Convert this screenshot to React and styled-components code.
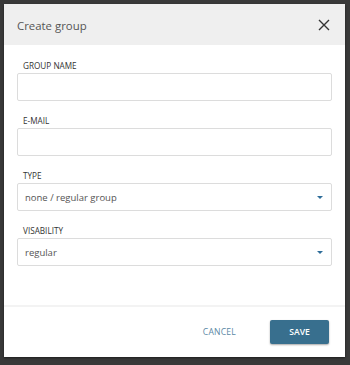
import React, { useState } from "react";
import styled, { createGlobalStyle } from "styled-components";

const GlobalStyle = createGlobalStyle`
  html, body {
    margin: 0;
    padding: 0;
    background: #393939;
  }
  body {
    padding: 4px 5px 8px 4px;
    font-family: "Open Sans", "Liberation Sans", sans-serif;
  }
`;

const Modal = styled.div`
  width: 341px;
  height: 353px;
  background: #fff;
  display: flex;
  flex-direction: column;
  box-shadow: 0 1px 2px rgba(0, 0, 0, 0.5);
`;

const Header = styled.div`
  height: 41px;
  flex: none;
  background: #efefef;
  display: flex;
  align-items: center;
  justify-content: space-between;
  padding: 0 14px 0 13px;
`;

const Title = styled.h2`
  margin: 0;
  font-size: 11.4px;
  font-weight: 400;
  color: #555;
  padding-top: 1px;
`;

const CloseButton = styled.button`
  border: none;
  background: none;
  padding: 0;
  width: 14px;
  height: 14px;
  display: flex;
  align-items: center;
  justify-content: center;
  cursor: pointer;
`;

const Body = styled.div`
  flex: 1;
  padding: 15px 13px 0 13px;
  display: flex;
  flex-direction: column;
  gap: 14px;
`;

const Field = styled.div`
  display: flex;
  flex-direction: column;
  gap: 1px;
`;

const Label = styled.label`
  font-size: 8.2px;
  line-height: 12px;
  color: #333;
  text-transform: uppercase;
  padding-left: 6px;
`;

const Input = styled.input`
  box-sizing: border-box;
  height: 28px;
  width: 100%;
  border: 1px solid #dcdcdc;
  border-radius: 2px;
  padding: 0 7px;
  font-family: inherit;
  font-size: 9.5px;
  color: #555;
  outline: none;
`;

const SelectBox = styled.div`
  box-sizing: border-box;
  height: 28px;
  width: 100%;
  border: 1px solid #dcdcdc;
  border-radius: 2px;
  padding: 0 8px 0 7px;
  display: flex;
  align-items: center;
  justify-content: space-between;
  font-size: 9.5px;
  color: #555;
`;

const Caret = styled.span`
  width: 0;
  height: 0;
  border-left: 3px solid transparent;
  border-right: 3px solid transparent;
  border-top: 3px solid #2e6d99;
`;

const Footer = styled.div`
  height: 52px;
  flex: none;
  border-top: 2px solid #f3f3f3;
  box-sizing: border-box;
  display: flex;
  align-items: center;
  justify-content: flex-end;
  gap: 34px;
  padding: 0 16px 0 0;
`;

const TextButton = styled.button`
  border: none;
  background: none;
  padding: 0;
  font-family: inherit;
  font-size: 8.6px;
  color: #5b88a4;
  letter-spacing: 0.2px;
  cursor: pointer;
`;

const PrimaryButton = styled.button`
  width: 59px;
  height: 24px;
  border: none;
  border-radius: 2px;
  background: #386f8e;
  color: #fff;
  font-family: inherit;
  font-size: 8.6px;
  font-weight: 600;
  box-shadow: 0 1px 2px rgba(0, 0, 0, 0.35);
  cursor: pointer;
`;

const CloseIcon = () => (
  <svg width="12" height="12" viewBox="0 0 12 12">
    <path d="M1 1 L11 11 M11 1 L1 11" stroke="#333" strokeWidth="1.4" />
  </svg>
);

export default function App() {
  const [name, setName] = useState("");
  const [email, setEmail] = useState("");

  return (
    <>
      <GlobalStyle />
      <Modal>
        <Header>
          <Title>Create group</Title>
          <CloseButton aria-label="close">
            <CloseIcon />
          </CloseButton>
        </Header>
        <Body>
          <Field>
            <Label>Group name</Label>
            <Input value={name} onChange={(e) => setName(e.target.value)} />
          </Field>
          <Field>
            <Label>E-mail</Label>
            <Input value={email} onChange={(e) => setEmail(e.target.value)} />
          </Field>
          <Field>
            <Label>Type</Label>
            <SelectBox>
              none / regular group
              <Caret />
            </SelectBox>
          </Field>
          <Field>
            <Label>Visability</Label>
            <SelectBox>
              regular
              <Caret />
            </SelectBox>
          </Field>
        </Body>
        <Footer>
          <TextButton>CANCEL</TextButton>
          <PrimaryButton>SAVE</PrimaryButton>
        </Footer>
      </Modal>
    </>
  );
}
